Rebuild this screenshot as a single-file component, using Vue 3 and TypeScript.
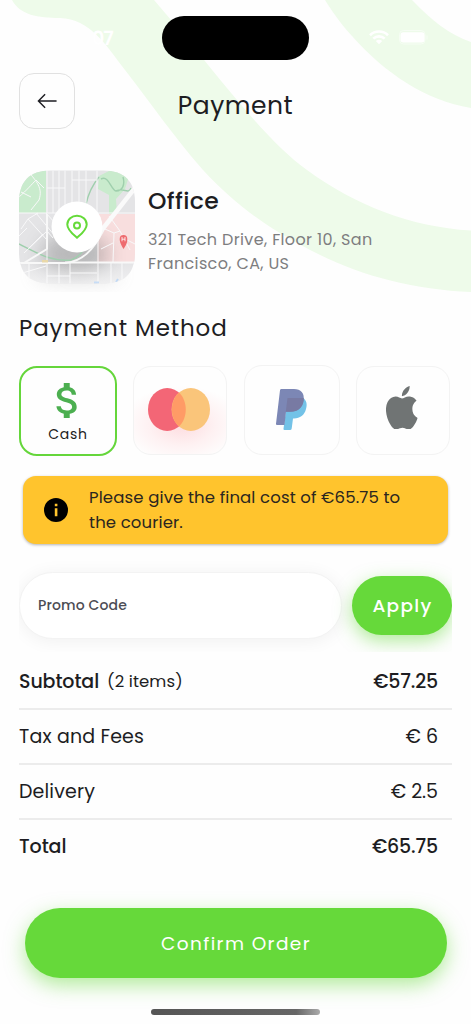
<script setup lang="ts">
interface SummaryRow {
  label: string
  note?: string
  value: string
  strong: boolean
  key: string
}

const rows: SummaryRow[] = [
  { key: 'subtotal', label: 'Subtotal', note: '(2 items)', value: '€57.25', strong: true },
  { key: 'tax', label: 'Tax and Fees', value: '€ 6', strong: false },
  { key: 'delivery', label: 'Delivery', value: '€ 2.5', strong: false },
  { key: 'total', label: 'Total', value: '€65.75', strong: true },
]
</script>

<template>
  <div class="screen">
    <svg class="backdrop" viewBox="0 0 471 300" aria-hidden="true">
      <path
        d="M12 0C20 15 38 18 60 18C90 19 106 45 125 70C153 106 174 137 203 170C228 197 253 217 280 233C340 270 400 289 471 292V230.500C410 227 355 205 307 170C260 136 215 70 154 0Z"
      />
      <path d="M325 0C335 16 343 26 352 36C386 74 425 100 471 108V42C450 35 431 20 412 0Z" />
    </svg>

    <div class="status">
      <span class="clock">07</span>
      <div class="island"></div>
      <div class="signals">
        <svg class="wifi" viewBox="0 0 20 15" aria-hidden="true">
          <path d="M1 5.200C6 0.300 14 0.300 19 5.200" />
          <path d="M4.300 8.600C7.500 5.600 12.500 5.600 15.700 8.600" />
          <path class="dot" d="M6.800 11C8.800 9.400 11.200 9.400 13.200 11L10 14.300Z" />
        </svg>
        <svg class="battery" viewBox="0 0 29 15" aria-hidden="true">
          <rect class="shell" x="0.500" y="0.500" width="25.500" height="13.500" rx="4" />
          <rect x="1.500" y="2.300" width="24" height="10.200" rx="2.700" />
          <path class="shell" d="M28 5.500v4" />
        </svg>
      </div>
    </div>

    <header class="header">
      <button class="back" aria-label="Back">
        <svg viewBox="0 0 22 16"><path d="M20.500 8H1.500M8.500 1L1.500 8L8.500 15" /></svg>
      </button>
      <h1 class="title">Payment</h1>
    </header>

    <section class="address">
      <svg class="map" viewBox="0 0 116 118" aria-hidden="true">
        <defs>
          <clipPath id="tile"><path d="M32 0.500H84C106 0.500 116 12 116 32V82C116 104 105 113.500 84 113.500H32C11 113.500 0 104 0 82V32C0 12 10 0.500 32 0.500Z" /></clipPath>
          <linearGradient id="fade" x1="0" y1="0" x2="0" y2="1">
            <stop offset="0.780" stop-color="#fefefe" stop-opacity="0" />
            <stop offset="1" stop-color="#fefefe" stop-opacity="0.550" />
          </linearGradient>
          <filter id="soft" x="-40%" y="-60%" width="180%" height="220%"><feGaussianBlur stdDeviation="9" /></filter>
        </defs>
        <ellipse cx="58" cy="104" rx="44" ry="8" fill="#888" opacity=".25" filter="url(#soft)" />
        <g clip-path="url(#tile)">
          <rect width="116" height="118" fill="#e4e4e6" />
          <path d="M0 0H27V43H0ZM80 6L92 0H112L106 19L97 29L98 44H90V25L79 19Z" fill="#c9ebcd" />
          <path d="M80 44H116V92H78Z" fill="#f8dede" />
          <ellipse cx="56" cy="84" rx="34" ry="22" fill="#777" opacity=".38" filter="url(#soft)" />
          <path d="M0 74C18 83 32 92 52 90C58 88 62 84 65 79M67 34C70 21 75 13 80 7M82 9C90 5 92 20 97 21C104 21 106 14 104 7M97 21C105 17 109 25 112 18" fill="none" stroke="#9fcfad" stroke-width="1.400" />
          <g fill="none" stroke="#f8f8f9" stroke-width="1">
            <path d="M28 0V43M34 0V43M40 0V43M46 0V43M53 0V36M60 0V33M67 0V34M78 0V43M79 44V118M0 43H116M28 18H46M53 10H78M0 27C8 20 12 15 17 10L25 18M8 0C18 12 24 18 20 30L12 40M2 22L12 27M2 59L9 49L28 70M9 49L19 43M17 43L36 66M27 43L36 53M5 83L28 61L34 68M10 78L24 64M0 66L8 58M28 80V118M10 93V118M40 93V118M51 93V118M51 103H78M28 106H51M92 93V118M103 93V118M90 46L101 61L111 80M79 56L95 63L94 92M95 63L101 61M104 68L116 74M82 79L94 73M0 104L27 96" />
          </g>
          <path d="M82 61L119 14" stroke="#fafafa" stroke-width="4.500" />
          <path d="M-2 93H47C64 91 74 80 84 61M5 93L28 79V44" fill="none" stroke="#f8f8f8" stroke-width="2" />
          <path d="M46 92.500H118" stroke="#f8f8f8" stroke-width="2" />
          <path d="M23 90H29V92.500H23Z" fill="#e9d8a8" />
          <path d="M75 112.500H80M97 112L99 109" stroke="#9ec3ef" stroke-width="2" />
          <rect width="116" height="118" fill="url(#fade)" />
        </g>
        <path d="M104.500 79C101 73 100.700 71 100.700 69A3.800 4 0 0 1 108.300 69C108.300 72 108 74 104.500 79Z" fill="#ee6c70" />
        <path d="M103 67V71.300M106 67V71.300M103 69.200H106" stroke="#fff" stroke-width=".8" />
        <circle cx="58" cy="57" r="25.500" fill="#fff" />
        <path d="M58 67.700C54.500 64.600 48.300 60 48.300 54.400A9.700 8.700 0 0 1 67.700 54.400C67.700 60 61.500 64.600 58 67.700Z" class="pin" />
        <circle cx="58" cy="55.500" r="3" class="pin" />
      </svg>
      <div class="place">
        <h2 class="place-name">Office</h2>
        <p class="place-line"><span>321 Tech Drive, Floor 10, San</span><br /><span>Francisco, CA, US</span></p>
      </div>
    </section>

    <h2 class="section-title">Payment Method</h2>

    <div class="methods">
      <button class="method selected">
        <svg class="dollar" viewBox="6.100 3 10.400 18" preserveAspectRatio="none" aria-hidden="true">
          <path d="M11.800 10.900c-2.270-.59-3-1.200-3-2.150 0-1.090 1.010-1.850 2.700-1.850 1.780 0 2.440.85 2.500 2.100h2.210c-.07-1.720-1.120-3.300-3.210-3.810V3h-3v2.160c-1.940.42-3.500 1.680-3.500 3.610 0 2.310 1.910 3.460 4.700 4.130 2.500.6 3 1.480 3 2.410 0 .69-.49 1.790-2.700 1.790-2.060 0-2.870-.92-2.980-2.100h-2.200c.12 2.190 1.760 3.420 3.680 3.830V21h3v-2.150c1.950-.37 3.500-1.500 3.500-3.550 0-2.840-2.430-3.810-4.700-4.400z" />
        </svg>
        <span class="method-name">Cash</span>
      </button>
      <button class="method card" aria-label="Mastercard">
        <svg class="rings" viewBox="0 0 62 44" aria-hidden="true">
          <ellipse cx="19.200" cy="21.500" rx="19.200" ry="21.500" fill="#f36676" />
          <ellipse cx="42.800" cy="21.500" rx="19.200" ry="21.500" fill="#fac57a" />
          <path d="M31 4.500C40 13 40 30 31 38.500C21.500 30 21.500 13 31 4.500Z" fill="#ff9b66" />
        </svg>
      </button>
      <button class="method paypal-box" aria-label="PayPal">
        <svg class="paypal" viewBox="0 0 31 41" aria-hidden="true">
          <path d="M11.500 9H27C30.500 11 31.500 15.500 30 20C28.500 26 24 29.500 18 29.500H17L15.700 39.500Q15.500 41 14 41H8.500Q7.300 41 7.500 39.700L9.800 22.800Z" fill="#73c2e7" />
          <path d="M5.300 0H18C25 0 28.500 4 27.700 11C26.700 19 21.500 22.800 14 22.800H10L8.500 36H1Q-.1 36 0 34.700L4 1.200Q4.200 0 5.300 0Z" fill="#7c87b5" />
          <path d="M11.500 9H27.700C28 16 24 22.800 14 22.800H9.800Z" fill="#787aa3" />
        </svg>
      </button>
      <button class="method apple-box" aria-label="Apple Pay">
        <svg class="apple" viewBox="2.250 0 19.500 24" preserveAspectRatio="none" aria-hidden="true">
          <path d="M12.152 6.896c-.948 0-2.415-1.078-3.960-1.040-2.040.027-3.910 1.183-4.961 3.014-2.117 3.675-.546 9.103 1.519 12.090 1.013 1.454 2.208 3.090 3.792 3.039 1.520-.065 2.090-.987 3.935-.987 1.831 0 2.350.987 3.960.948 1.637-.026 2.676-1.480 3.676-2.948 1.156-1.688 1.636-3.325 1.662-3.415-.039-.013-3.182-1.221-3.220-4.857-.026-3.040 2.480-4.494 2.597-4.559-1.429-2.090-3.623-2.324-4.390-2.376-2-.156-3.675 1.090-4.610 1.090zM16.900 0C14.500.6 12 2.800 12.100 5.600C14.800 5.500 17.100 2.700 16.900 0Z" />
        </svg>
      </button>
    </div>

    <div class="notice">
      <svg class="info" viewBox="0 0 24 24" aria-hidden="true">
        <circle cx="12" cy="12" r="12" />
        <path d="M10.800 5.800h2.600v2.400h-2.600zM10.800 10.200h2.600v8h-2.600z" fill="#ffc42d" />
      </svg>
      <p class="notice-text">Please give the final cost of €65.75 to<br />the courier.</p>
    </div>

    <div class="promo">
      <div class="promo-field"><span>Promo Code</span></div>
      <button class="apply"><span>Apply</span></button>
    </div>

    <div class="summary">
      <div v-for="row in rows" :key="row.key" class="row" :class="[row.key, { strong: row.strong }]">
        <span class="label">{{ row.label }}</span>
        <span v-if="row.note" class="note">{{ row.note }}</span>
        <span class="value">{{ row.value }}</span>
      </div>
    </div>

    <button class="confirm"><span>Confirm Order</span></button>
    <div class="home-bar"></div>
  </div>
</template>

<style>
body {
  background: #fefefe;
}
</style>

<style scoped>
.screen {
  position: relative;
  box-sizing: border-box;
  width: 471px;
  height: 1024px;
  overflow: hidden;
  display: flex;
  flex-direction: column;
  background: #fefefe;
  color: #1d1d22;
  font-family: Poppins, Inter, "Open Sans", sans-serif;
  font-feature-settings: "cv11", "ss03";
  white-space: nowrap;
}
.screen > * { flex-shrink: 0; }
.screen > :not(.backdrop) { position: relative; }
h1, h2, p { margin: 0; font-weight: 400; }
button {
  box-sizing: border-box;
  margin: 0;
  padding: 0;
  border: 0;
  font: inherit;
  font-feature-settings: inherit;
  color: inherit;
}
svg { display: block; }
.backdrop {
  position: absolute;
  left: 0;
  top: 0;
  width: 471px;
  height: 300px;
  fill: #eefbea;
}

.status {
  height: 72px;
  display: grid;
  grid-template-columns: 162px 147px 1fr;
}
.clock {
  padding: 27px 0 0 92px;
  color: #fff;
  font-size: 19px;
  line-height: 23px;
  font-weight: 600;
  letter-spacing: -1px;
}
.island {
  margin-top: 16px;
  height: 43.500px;
  border-radius: 22px;
  background: #000;
}
.signals { display: flex; padding: 30px 0 0 60px; gap: 10px; }
.wifi { width: 20px; height: 15px; fill: none; stroke: #fff; stroke-width: 2.600; }
.wifi .dot { fill: #fff; stroke: none; }
.battery { width: 29px; height: 15px; fill: #fff; }
.battery .shell { fill: none; stroke: #f6fdf4; }

.header {
  height: 98px;
  display: grid;
  grid-template-columns: 1fr auto 1fr;
  padding: 0 19px;
}
.back {
  width: 56px;
  height: 56px;
  margin-top: .6px;
  display: grid;
  place-items: center;
  border: 1px solid #e1e1e1;
  border-radius: 15px;
  background: #fefefe;
}
.back svg { width: 21px; height: 16px; fill: none; stroke: #1d1d22; stroke-width: 1.500; }
.title { padding-top: 18px; font-size: 25px; line-height: 32px; letter-spacing: .5px; }

.address { height: 142px; display: flex; padding-left: 19px; }
.map { width: 116px; height: 118px; overflow: visible; }
.pin { fill: none; stroke: #65da39; stroke-width: 2; }
.place { padding: 15px 0 0 13px; }
.place-name { font-size: 23.500px; line-height: 32px; font-weight: 500; letter-spacing: .4px; }
.place-line { margin-top: 11px; color: #7d7d7f; font-size: 16px; line-height: 23.500px; letter-spacing: .36px; }

.section-title { height: 54px; padding-left: 19px; font-size: 23px; line-height: 32px; letter-spacing: .87px; }

.methods { height: 110px; display: flex; align-items: flex-start; padding-left: 19px; }
.method {
  width: 94px;
  height: 89px;
  display: flex;
  align-items: flex-start;
  border: 1.500px solid #f3f3f3;
  border-radius: 18px;
  background: #fefefe;
}
.selected {
  width: 98px;
  height: 90px;
  margin-top: -.5px;
  border: 2px solid #65d63b;
  flex-direction: column;
  align-items: center;
}
.dollar { width: 20.700px; height: 35px; margin: 15px 3px 0 0; fill: #4caf50; }
.method-name { margin-top: 6px; font-size: 14px; line-height: 20px; letter-spacing: .7px; }
.card {
  margin-left: 15.500px;
  padding: 21px 0 0 14.500px;
  background: radial-gradient(ellipse 50px 32px at 52% 66%, #fddcdf, #fef1f2 65%, #fefefe 120%);
}
.rings { width: 62px; height: 44px; }
.paypal-box { width: 96px; height: 90px; margin: -1px 0 0 17px; padding: 23px 0 0 31px; }
.paypal { width: 31px; height: 41px; overflow: visible; }
.apple-box { margin-left: 16.500px; padding: 18.500px 0 0 29px; }
.apple { width: 31.500px; height: 43.500px; fill: #707474; }

.notice {
  box-sizing: border-box;
  width: 425px;
  height: 68px;
  margin-left: 23px;
  display: flex;
  align-items: center;
  padding: 0 0 1px 21px;
  gap: 21px;
  border-radius: 13px;
  background: #ffc42d;
  box-shadow: 0 1px 3px rgba(0, 0, 0, .3);
  color: #2b2620;
  font-size: 16.500px;
  line-height: 25px;
}
.info { width: 24px; height: 24px; }
.notice-text { letter-spacing: .13px; }

.promo {
  box-sizing: border-box;
  width: 433px;
  height: 98px;
  margin: 10px 0 0 19px;
  overflow: hidden;
  display: flex;
  align-items: flex-start;
  justify-content: space-between;
  padding-top: 18px;
}
.promo-field {
  box-sizing: border-box;
  width: 323px;
  height: 67px;
  display: flex;
  align-items: center;
  padding-left: 18px;
  border: 1px solid #f3f3f3;
  border-radius: 34px;
  background: #fff;
  box-shadow: 0 2px 18px rgba(0, 0, 0, .06);
  color: #4c4c54;
  font-size: 14px;
  font-weight: 500;
}
.promo-field span { letter-spacing: .13px; }
.apply {
  width: 100px;
  height: 59px;
  margin-top: 4px;
  border-radius: 30px;
  background: #66d93a;
  box-shadow: 0 6px 18px rgba(102, 217, 58, .5);
  color: #fff;
  font-size: 18.500px;
  font-weight: 500;
}
.apply span { margin-left: 1px; letter-spacing: 1.300px; }

.summary { width: 433px; margin: 3px 0 0 19px; height: 253px; font-size: 19px; }
.row {
  box-sizing: border-box;
  height: 55px;
  display: flex;
  align-items: center;
  padding-right: 14px;
  border-bottom: 2px solid #ececec;
}
.row.total { border-bottom-color: transparent; }
.label { letter-spacing: .15px; }
.strong { font-weight: 500; }
.strong .label { letter-spacing: -.1px; }
.strong .value { letter-spacing: -.15px; }
.note { margin-left: 8px; font-size: 16.500px; font-weight: 400; letter-spacing: .1px; }
.value { margin-left: auto; }

.confirm {
  width: 422px;
  height: 70px;
  margin-left: 24.500px;
  border-radius: 35px;
  background: #66d93a;
  box-shadow: 0 7px 20px rgba(102, 217, 58, .5);
  color: #fff;
  font-size: 18.500px;
}
.confirm span { margin-left: 1px; letter-spacing: 1.400px; }
.home-bar {
  width: 169px;
  height: 6px;
  margin: 30.500px 0 0 151px;
  border-radius: 3px;
  background: linear-gradient(90deg, #555 0%, #666 86%, #aaa 100%);
}
</style>
